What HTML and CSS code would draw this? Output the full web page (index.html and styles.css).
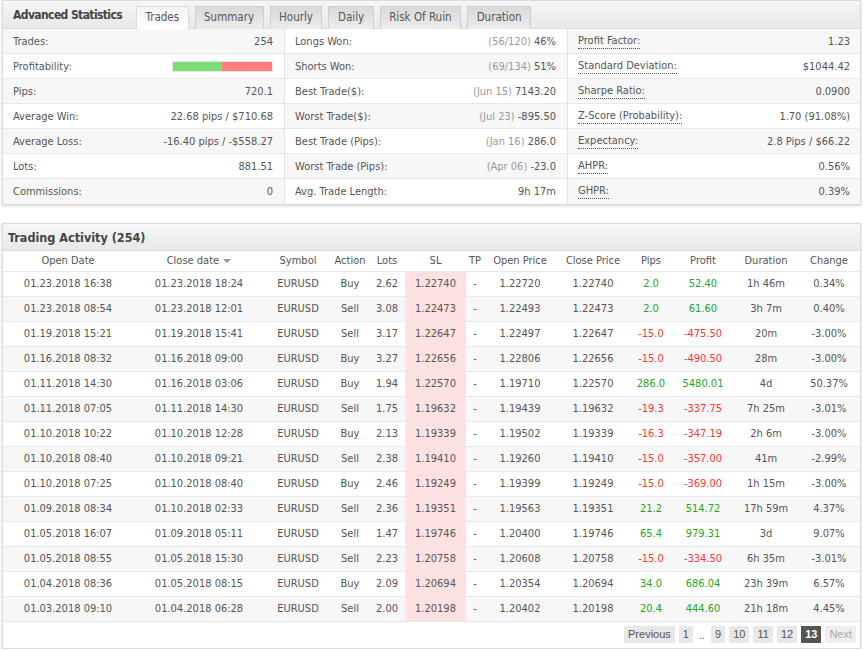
FILE: index.html
```html
<!DOCTYPE html>
<html>
<head>
<meta charset="utf-8">
<title>Advanced Statistics</title>
<link rel="stylesheet" href="styles.css">
</head>
<body>
<div class="panel stats-panel">
  <div class="panel-head">
    <div class="panel-title">Advanced Statistics</div>
    <ul class="tabs">
      <li class="tab active">Trades</li>
      <li class="tab">Summary</li>
      <li class="tab">Hourly</li>
      <li class="tab">Daily</li>
      <li class="tab">Risk Of Ruin</li>
      <li class="tab">Duration</li>
    </ul>
  </div>
  <div class="stats">
    <div class="col col1">
      <div class="row"><span>Trades:</span><span>254</span></div>
      <div class="row"><span>Profitability:</span><span class="bar"><span class="bar-win"></span><span class="bar-loss"></span></span></div>
      <div class="row"><span>Pips:</span><span>720.1</span></div>
      <div class="row"><span>Average Win:</span><span>22.68 pips / $710.68</span></div>
      <div class="row"><span>Average Loss:</span><span>-16.40 pips / -$558.27</span></div>
      <div class="row"><span>Lots:</span><span>881.51</span></div>
      <div class="row"><span>Commissions:</span><span>0</span></div>
    </div>
    <div class="col col2">
      <div class="row"><span>Longs Won:</span><span><span class="muted">(56/120)</span> 46%</span></div>
      <div class="row"><span>Shorts Won:</span><span><span class="muted">(69/134)</span> 51%</span></div>
      <div class="row"><span>Best Trade($):</span><span><span class="muted">(Jun 15)</span> 7143.20</span></div>
      <div class="row"><span>Worst Trade($):</span><span><span class="muted">(Jul 23)</span> -895.50</span></div>
      <div class="row"><span>Best Trade (Pips):</span><span><span class="muted">(Jan 16)</span> 286.0</span></div>
      <div class="row"><span>Worst Trade (Pips):</span><span><span class="muted">(Apr 06)</span> -23.0</span></div>
      <div class="row"><span>Avg. Trade Length:</span><span>9h 17m</span></div>
    </div>
    <div class="col col3">
      <div class="row"><span class="dotted">Profit Factor:</span><span>1.23</span></div>
      <div class="row"><span class="dotted">Standard Deviation:</span><span>$1044.42</span></div>
      <div class="row"><span class="dotted">Sharpe Ratio:</span><span>0.0900</span></div>
      <div class="row"><span class="dotted">Z-Score (Probability):</span><span>1.70 (91.08%)</span></div>
      <div class="row"><span class="dotted">Expectancy:</span><span>2.8 Pips / $66.22</span></div>
      <div class="row"><span class="dotted">AHPR:</span><span>0.56%</span></div>
      <div class="row"><span class="dotted">GHPR:</span><span>0.39%</span></div>
    </div>
  </div>
</div>

<div class="panel activity-panel">
  <div class="panel-head activity-head">
    <div class="panel-title">Trading Activity (254)</div>
  </div>
  <table class="trades">
    <colgroup>
      <col class="c130"><col class="c132"><col class="c66"><col class="c38"><col class="c36"><col class="c61"><col class="c18"><col class="c72"><col class="c74"><col class="c42"><col class="c62"><col class="c64"><col class="c62">
    </colgroup>
    <thead>
      <tr><th>Open Date</th><th>Close date <span class="caret"></span></th><th>Symbol</th><th>Action</th><th>Lots</th><th>SL</th><th>TP</th><th>Open Price</th><th>Close Price</th><th>Pips</th><th>Profit</th><th>Duration</th><th>Change</th></tr>
    </thead>
    <tbody>
      <tr><td>01.23.2018 16:38</td><td>01.23.2018 18:24</td><td>EURUSD</td><td>Buy</td><td>2.62</td><td class="sl">1.22740</td><td>-</td><td>1.22720</td><td>1.22740</td><td class="pos">2.0</td><td class="pos">52.40</td><td>1h 46m</td><td>0.34%</td></tr>
      <tr><td>01.23.2018 08:54</td><td>01.23.2018 12:01</td><td>EURUSD</td><td>Sell</td><td>3.08</td><td class="sl">1.22473</td><td>-</td><td>1.22493</td><td>1.22473</td><td class="pos">2.0</td><td class="pos">61.60</td><td>3h 7m</td><td>0.40%</td></tr>
      <tr><td>01.19.2018 15:21</td><td>01.19.2018 15:41</td><td>EURUSD</td><td>Sell</td><td>3.17</td><td class="sl">1.22647</td><td>-</td><td>1.22497</td><td>1.22647</td><td class="neg">-15.0</td><td class="neg">-475.50</td><td>20m</td><td>-3.00%</td></tr>
      <tr><td>01.16.2018 08:32</td><td>01.16.2018 09:00</td><td>EURUSD</td><td>Buy</td><td>3.27</td><td class="sl">1.22656</td><td>-</td><td>1.22806</td><td>1.22656</td><td class="neg">-15.0</td><td class="neg">-490.50</td><td>28m</td><td>-3.00%</td></tr>
      <tr><td>01.11.2018 14:30</td><td>01.16.2018 03:06</td><td>EURUSD</td><td>Buy</td><td>1.94</td><td class="sl">1.22570</td><td>-</td><td>1.19710</td><td>1.22570</td><td class="pos">286.0</td><td class="pos">5480.01</td><td>4d</td><td>50.37%</td></tr>
      <tr><td>01.11.2018 07:05</td><td>01.11.2018 14:30</td><td>EURUSD</td><td>Sell</td><td>1.75</td><td class="sl">1.19632</td><td>-</td><td>1.19439</td><td>1.19632</td><td class="neg">-19.3</td><td class="neg">-337.75</td><td>7h 25m</td><td>-3.01%</td></tr>
      <tr><td>01.10.2018 10:22</td><td>01.10.2018 12:28</td><td>EURUSD</td><td>Buy</td><td>2.13</td><td class="sl">1.19339</td><td>-</td><td>1.19502</td><td>1.19339</td><td class="neg">-16.3</td><td class="neg">-347.19</td><td>2h 6m</td><td>-3.00%</td></tr>
      <tr><td>01.10.2018 08:40</td><td>01.10.2018 09:21</td><td>EURUSD</td><td>Sell</td><td>2.38</td><td class="sl">1.19410</td><td>-</td><td>1.19260</td><td>1.19410</td><td class="neg">-15.0</td><td class="neg">-357.00</td><td>41m</td><td>-2.99%</td></tr>
      <tr><td>01.10.2018 07:25</td><td>01.10.2018 08:40</td><td>EURUSD</td><td>Buy</td><td>2.46</td><td class="sl">1.19249</td><td>-</td><td>1.19399</td><td>1.19249</td><td class="neg">-15.0</td><td class="neg">-369.00</td><td>1h 15m</td><td>-3.00%</td></tr>
      <tr><td>01.09.2018 08:34</td><td>01.10.2018 02:33</td><td>EURUSD</td><td>Sell</td><td>2.36</td><td class="sl">1.19351</td><td>-</td><td>1.19563</td><td>1.19351</td><td class="pos">21.2</td><td class="pos">514.72</td><td>17h 59m</td><td>4.37%</td></tr>
      <tr><td>01.05.2018 16:07</td><td>01.09.2018 05:11</td><td>EURUSD</td><td>Sell</td><td>1.47</td><td class="sl">1.19746</td><td>-</td><td>1.20400</td><td>1.19746</td><td class="pos">65.4</td><td class="pos">979.31</td><td>3d</td><td>9.07%</td></tr>
      <tr><td>01.05.2018 08:55</td><td>01.05.2018 15:30</td><td>EURUSD</td><td>Sell</td><td>2.23</td><td class="sl">1.20758</td><td>-</td><td>1.20608</td><td>1.20758</td><td class="neg">-15.0</td><td class="neg">-334.50</td><td>6h 35m</td><td>-3.01%</td></tr>
      <tr><td>01.04.2018 08:36</td><td>01.05.2018 08:15</td><td>EURUSD</td><td>Buy</td><td>2.09</td><td class="sl">1.20694</td><td>-</td><td>1.20354</td><td>1.20694</td><td class="pos">34.0</td><td class="pos">686.04</td><td>23h 39m</td><td>6.57%</td></tr>
      <tr><td>01.03.2018 09:10</td><td>01.04.2018 06:28</td><td>EURUSD</td><td>Sell</td><td>2.00</td><td class="sl">1.20198</td><td>-</td><td>1.20402</td><td>1.20198</td><td class="pos">20.4</td><td class="pos">444.60</td><td>21h 18m</td><td>4.45%</td></tr>
    </tbody>
  </table>
  <div class="pager">
    <span class="pg">Previous</span>
    <span class="pg">1</span>
    <span class="dots">..</span>
    <span class="pg">9</span>
    <span class="pg">10</span>
    <span class="pg">11</span>
    <span class="pg">12</span>
    <span class="pg current">13</span>
    <span class="pg disabled">Next</span>
  </div>
</div>
</body>
</html>
```

FILE: styles.css
```css
* { box-sizing: border-box; }
html, body { background: #fff; }
body {
  margin: 0;
  padding: 0 2px;
  font-family: Tahoma, "DejaVu Sans Condensed", "DejaVu Sans", sans-serif;
  font-size: 11px;
  color: #555;
}
.panel {
  border: 1px solid #dcdcdc;
  background: #fff;
  box-shadow: 0 1px 3px rgba(0,0,0,0.18);
}
.panel-head {
  height: 28px;
  display: flex;
  align-items: flex-end;
  background: linear-gradient(#f6f6f6, #e8e8e8);
  border-bottom: 1px solid #dcdcdc;
}
.panel-title {
  font-weight: bold;
  font-size: 12px;
  letter-spacing: -0.6px;
  color: #444;
  align-self: center;
  padding-left: 10px;
  width: 133px;
}
.tabs {
  list-style: none;
  margin: 0;
  padding: 0;
  display: flex;
  gap: 6px;
  margin-bottom: -1px;
}
.tab {
  height: 23px;
  line-height: 21px;
  padding: 0 8.5px;
  font-size: 11.5px;
  color: #555;
  border: 1px solid #cfcfcf;
  border-bottom: none;
  background: linear-gradient(#d9d9d9, #ececec);
}
.tab.active {
  background: linear-gradient(#f4f4f4, #fff);
  border-color: #dcdcdc;
}
.stats {
  display: grid;
  grid-template-columns: 281px 284px 1fr;
}
.col2 { border-left: 1px solid #e3e3e3; border-right: 1px solid #e3e3e3; }
.row {
  height: 25px;
  display: flex;
  justify-content: space-between;
  align-items: center;
  padding: 0 11px 0 10px;
  border-bottom: 1px solid #e8e8e8;
  white-space: nowrap;
}
.row:last-child { border-bottom: none; }
.col1 .row:nth-child(odd), .col3 .row:nth-child(odd) { background: #f7f7f7; }
.col2 .row:nth-child(even) { background: #f7f7f7; }
.col3 .row { padding-right: 10px; }
.muted { color: #999; }
.dotted { border-bottom: 1px dotted #555; line-height: 14px; }
.bar {
  display: flex;
  width: 101px;
  height: 11px;
  border: 1px solid #e6e6e6;
}
.bar-win { width: 49px; background: #80dd76; }
.bar-loss { flex: 1; background: #ff7f7f; }

.activity-panel { margin-top: 18px; }
.activity-head { height: 27px; }
.activity-head .panel-title { font-size: 12.5px; letter-spacing: 0; padding-left: 5px; width: auto; }
.trades {
  width: 857px;
  table-layout: fixed;
  border-collapse: collapse;
}
.c130 { width: 130px; } .c132 { width: 132px; } .c66 { width: 66px; }
.c38 { width: 38px; } .c36 { width: 36px; } .c61 { width: 61px; }
.c18 { width: 18px; } .c72 { width: 72px; } .c74 { width: 74px; }
.c42 { width: 42px; } .c62 { width: 62px; } .c64 { width: 64px; }
.trades th {
  height: 20px;
  font-weight: normal;
  color: #555;
  text-align: center;
  border-bottom: 1px solid #e8e8e8;
  padding: 0;
  white-space: nowrap;
  line-height: 14px;
}
.trades thead tr { height: 20px; }
.trades td {
  height: 25px;
  text-align: center;
  border-bottom: 1px solid #e8e8e8;
  padding: 0;
  white-space: nowrap;
  line-height: 14px;
}
.trades tbody tr:nth-child(even) td { background: #f7f7f7; }
.trades tbody tr td.sl { background: #ffe1e1; }
.trades td.pos { color: #1ea71e; }
.trades td.neg { color: #f33; }
.caret {
  display: inline-block;
  width: 0; height: 0;
  border-left: 4px solid transparent;
  border-right: 4px solid transparent;
  border-top: 4px solid #999;
  vertical-align: middle;
  margin-left: 1px;
}
.pager {
  display: flex;
  justify-content: flex-end;
  align-items: center;
  gap: 4px;
  padding: 4px 4px 4px 0;
  height: 26px;
  font-family: "Liberation Sans", Arial, sans-serif;
  font-size: 11px;
}
.pg {
  height: 17px;
  line-height: 17px;
  padding: 0 4px;
  background: #e8e8e8;
  color: #555;
}
.dots { padding: 0 2px; color: #555; }
.pg.current { background: #555; color: #fff; font-weight: bold; }
.pg.disabled { color: #aaa; background: #eee; }
```
